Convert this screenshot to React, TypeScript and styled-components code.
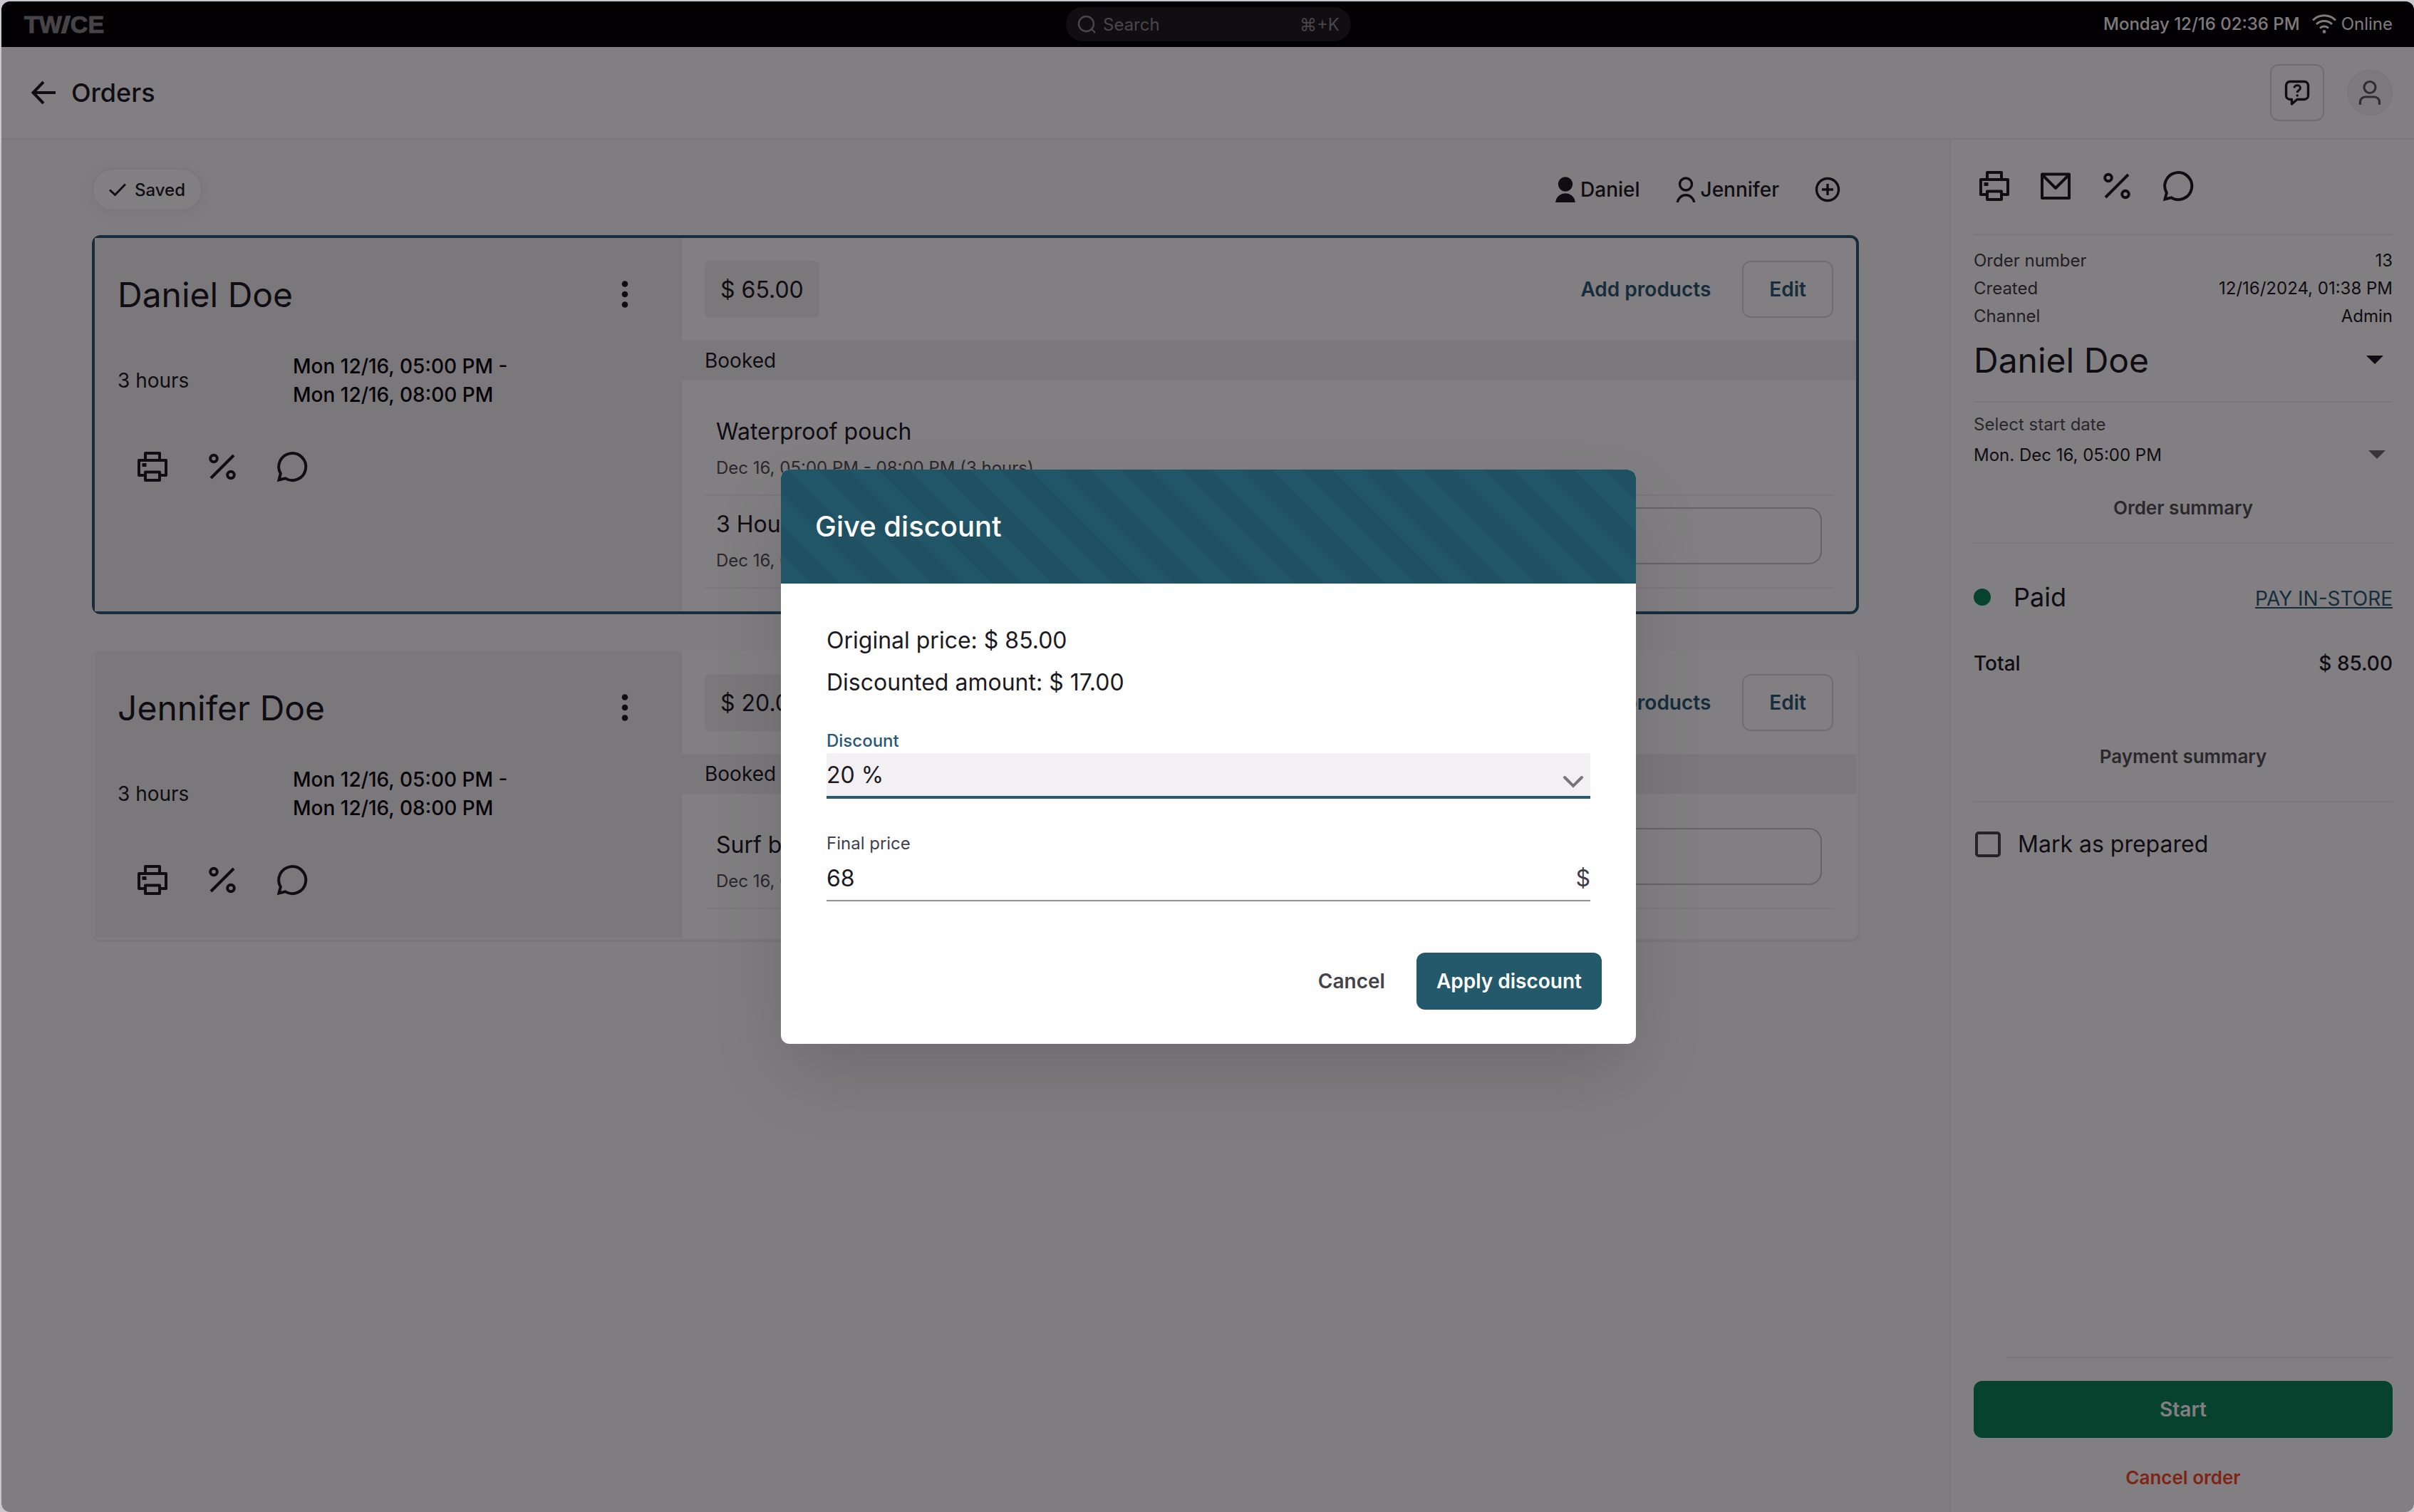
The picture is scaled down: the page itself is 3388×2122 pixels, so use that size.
import React from 'react';
import styled, { createGlobalStyle, css } from 'styled-components';

const color = {
  ink: '#1b1922',
  black: '#050408',
  muted: '#504e56',
  teal: '#2b5b72',
  line: '#f0eef0',
  shade: '#f3f1f3',
  page: '#fcfafc',
};

const GlobalStyle = createGlobalStyle`
  *, *::before, *::after { box-sizing: border-box; }
  html, body { margin: 0; background: #c9c8d0; }
  body, button, input, select {
    font-family: Inter, "Liberation Sans", sans-serif;
    color: ${color.ink};
  }
  button { border: 0; padding: 0; background: none; cursor: pointer; }
  h1, h2, h3, p, dl, dd, ul { margin: 0; padding: 0; }
  svg { display: block; flex: none; }
`;

/* ---------- icons ---------- */

const line = {
  fill: 'none',
  stroke: 'currentColor',
  strokeWidth: 4,
} as const;

const PrinterIcon = () => (
  <svg width="50" height="50" viewBox="0 0 50 50" {...line} strokeLinejoin="round">
    <path d="M15 16V6H35V16" />
    <path d="M14 37H6V16H44V37H36" />
    <path d="M15 32.5H35V44H15Z" />
    <rect x="10.5" y="20" width="6" height="5" fill="currentColor" stroke="none" />
  </svg>
);

const MailIcon = () => (
  <svg width="50" height="50" viewBox="0 0 50 50" {...line} strokeLinejoin="round">
    <path d="M6 8.5H44V42H6Z" />
    <path d="M6.5 9.5L25 28L43.5 9.5" />
  </svg>
);

const PercentIcon = () => (
  <svg width="50" height="50" viewBox="0 0 50 50" {...line}>
    <circle cx="13" cy="13.5" r="4.8" />
    <circle cx="37" cy="36.5" r="4.8" />
    <path d="M9 41L41 9" />
  </svg>
);

const ChatIcon = () => (
  <svg width="50" height="50" viewBox="0 0 50 50" {...line}>
    <path d="M6.5 43.5L8.8 34.6A19 19 0 1 1 15.5 41.4Z" />
  </svg>
);

const ArrowLeftIcon = () => (
  <svg width="36" height="36" viewBox="0 0 36 36" {...line}>
    <path d="M18 3L3.500 18L18 33M3.500 18H35" />
  </svg>
);

const CheckIcon = () => (
  <svg width="24" height="24" viewBox="0 0 24 24" {...line} strokeWidth={3}>
    <path d="M1 12.500L8.500 19.500L23 4.500" />
  </svg>
);

const SearchIcon = () => (
  <svg width="26" height="26" viewBox="0 0 26 26" {...line} strokeWidth={2.4}>
    <circle cx="12.500" cy="12.500" r="10.500" />
    <path d="M20 20L25 25" />
  </svg>
);

const WifiIcon = () => (
  <svg width="36" height="30" viewBox="0 0 36 30" {...line} strokeWidth={3}>
    <path d="M2 10.500A22.500 22.500 0 0 1 34 10.500" />
    <path d="M7 16A15.500 15.500 0 0 1 29 16" />
    <path d="M12 21.500A8.500 8.500 0 0 1 24 21.500" />
    <circle cx="18" cy="26.500" r="2.400" fill="currentColor" stroke="none" />
  </svg>
);

const HelpIcon = () => (
  <svg width="36" height="36" viewBox="0 0 36 36" {...line} strokeWidth={3.4} strokeLinejoin="round">
    <path d="M8 2.500H28A5.500 5.500 0 0 1 33.500 8V22A5.500 5.500 0 0 1 28 27.500H18L10.500 34V27.500H8A5.500 5.500 0 0 1 2.500 22V8A5.500 5.500 0 0 1 8 2.500Z" />
    <path d="M14 11.500C14 6.500 22.500 6.500 22.500 11.500C22.500 14.500 18.200 14.500 18.200 18" strokeWidth={3} />
    <circle cx="18.200" cy="22" r="1.800" fill="currentColor" stroke="none" />
  </svg>
);

const AccountIcon = () => (
  <svg width="34" height="36" viewBox="0 0 34 36" {...line} strokeWidth={3.2}>
    <circle cx="17" cy="10.500" r="8" />
    <path d="M3.500 35V31A7 7 0 0 1 10.500 24H23.500A7 7 0 0 1 30.500 31V35" />
  </svg>
);

const PersonIcon = ({ filled }: { filled?: boolean }) => (
  <svg
    width="28"
    height="36"
    viewBox="0 0 28 36"
    {...line}
    strokeWidth={3.4}
    fill={filled ? 'currentColor' : 'none'}
  >
    <circle cx="14" cy="10.500" r="8.500" />
    <path d={filled ? 'M2.200 34.300A12 11.500 0 0 1 25.800 34.300Z' : 'M2.200 36A12 12.500 0 0 1 25.800 36'} />
  </svg>
);

const PlusCircleIcon = () => (
  <svg width="36" height="36" viewBox="0 0 36 36" {...line} strokeWidth={3.4}>
    <circle cx="18" cy="18" r="15.500" />
    <path d="M18 10V26M10 18H26" />
  </svg>
);

const KebabIcon = () => (
  <svg width="48" height="48" viewBox="0 0 48 48" fill="currentColor">
    <circle cx="24" cy="9.500" r="4.300" />
    <circle cx="24" cy="24" r="4.300" />
    <circle cx="24" cy="38.500" r="4.300" />
  </svg>
);

const CaretIcon = () => (
  <svg width="24" height="12" viewBox="0 0 24 12" fill="currentColor">
    <path d="M0 0H24L12 12Z" />
  </svg>
);

const ChevronIcon = () => (
  <svg width="30" height="18" viewBox="0 0 30 18" {...line} strokeLinecap="round">
    <path d="M3 3L15 15L27 3" />
  </svg>
);

/* ---------- shell ---------- */

const Shell = styled.div`
  position: relative;
  display: flex;
  flex-direction: column;
  min-height: calc(100vh - 2px);
  margin: 2px 0 0 2px;
  border-radius: 12px;
  overflow: hidden;
  background: #fff;
`;

const TopBar = styled.header`
  display: grid;
  grid-template-columns: 1fr 400px 1fr;
  align-items: center;
  height: 64px;
  padding: 0 30px 0 32px;
  background: #000;
  color: #f8f4f8;
  font-size: 24px;
`;

const Logo = styled.div`
  display: flex;
  align-items: center;
  color: #8a888a;
  font-family: 'Liberation Sans', sans-serif;
  font-size: 34px;
  font-weight: 700;
  line-height: 40px;
  -webkit-text-stroke: 1px currentColor;
`;

const LogoSlash = styled.span`
  width: 7px;
  height: 25px;
  margin: 0 3px 0 2px;
  background: currentColor;
  transform: skewX(-16deg);
`;

const SearchBox = styled.label`
  display: flex;
  align-items: center;
  gap: 10px;
  height: 48px;
  padding: 0 16px;
  border-radius: 24px;
  background: #1e1a1f;
  color: #8e8c8e;
`;

const SearchInput = styled.input`
  flex: 1;
  min-width: 0;
  padding: 0;
  border: 0;
  outline: 0;
  background: none;
  color: inherit;
  font-size: 24px;
  &::placeholder { color: inherit; opacity: 1; }
`;

const Status = styled.div`
  display: flex;
  align-items: center;
  justify-content: flex-end;
  gap: 16px;
  padding-bottom: 2px;
`;

const Clock = styled.time`
  font-weight: 500;
`;

const Online = styled.span`
  display: flex;
  align-items: center;
  gap: 6px;
`;

const PageHeader = styled.div`
  display: flex;
  align-items: center;
  justify-content: space-between;
  height: 130px;
  padding: 0 30px 0 41px;
  border-bottom: 2px solid ${color.line};
`;

const BackButton = styled.button`
  display: flex;
  align-items: center;
  gap: 21px;
  font-size: 36px;
  font-weight: 500;
`;

const HeaderActions = styled.div`
  display: flex;
  align-items: center;
  gap: 32px;
`;

const HelpButton = styled.button`
  display: grid;
  place-items: center;
  width: 76px;
  height: 80px;
  border: 2px solid #dcdadc;
  border-radius: 12px;
`;

const Avatar = styled.button`
  display: grid;
  place-items: center;
  width: 64px;
  height: 64px;
  border: 2px solid #f0edf2;
  border-radius: 50%;
  background: #f7f4f9;
  color: #5c5864;
`;

const Columns = styled.div`
  flex: 1;
  display: grid;
  grid-template-columns: 1fr 652px;
`;

const Main = styled.main`
  padding: 40px 127px;
  background: ${color.page};
`;

/* ---------- main column ---------- */

const Toolbar = styled.div`
  display: flex;
  align-items: center;
  justify-content: space-between;
  height: 60px;
  margin-bottom: 34px;
  padding-right: 26px;
`;

const SavedPill = styled.div`
  display: flex;
  align-items: center;
  gap: 12px;
  height: 60px;
  padding: 0 22px;
  border: 2px solid ${color.line};
  border-radius: 30px;
  background: #fff;
  box-shadow: 0 4px 20px rgba(20, 16, 30, 0.06);
  font-size: 24px;
  font-weight: 500;
`;

const People = styled.div`
  display: flex;
  align-items: center;
  gap: 50px;
`;

const PersonButton = styled.button`
  display: flex;
  align-items: center;
  gap: 7px;
  font-size: 28px;
  font-weight: 500;
`;

const Cards = styled.div`
  display: grid;
  gap: 48px;
`;

const Card = styled.section<{ $active?: boolean }>`
  display: grid;
  grid-template-columns: 1fr 2fr;
  border: 4px solid ${(p) => (p.$active ? color.teal : 'transparent')};
  border-radius: 12px;
  background: #fff;
  background-clip: padding-box;
  ${(p) => !p.$active && css`box-shadow: 0 2px 2px rgba(20, 16, 30, 0.06);`}
`;

const Booking = styled.div`
  padding: 49px 56px 56px 32px;
  background: ${color.shade};
`;

const BookingTop = styled.div`
  display: flex;
  align-items: center;
  justify-content: space-between;
  height: 60px;
`;

const BookingName = styled.h2`
  font-size: 48px;
  font-weight: 400;
`;

const BookingTimes = styled.div`
  display: grid;
  grid-template-columns: 246px 1fr;
  align-items: center;
  margin: 51px 0 56px;
  font-size: 28px;
  font-weight: 500;
  line-height: 40px;
`;

const Period = styled.p`
  color: ${color.black};
`;

const Duration = styled.p`
  font-weight: 400;
`;

const IconRow = styled.div<{ $gap: number; $inset: number }>`
  display: flex;
  gap: ${(p) => p.$gap}px;
  padding-left: ${(p) => p.$inset}px;
`;

const IconButton = styled.button`
  display: grid;
  place-items: center;
`;

const ProductsTop = styled.div`
  display: flex;
  align-items: center;
  gap: 16px;
  padding: 32px;
`;

const Price = styled.div`
  display: flex;
  align-items: center;
  height: 80px;
  margin-right: auto;
  padding: 0 22px;
  border-radius: 8px;
  background: ${color.shade};
  font-size: 32px;
`;

const Button = styled.button<{ $kind: 'text' | 'outline' | 'solid' | 'plain' | 'start' }>`
  height: 80px;
  padding: 0 28px;
  border-radius: 12px;
  font-size: 28px;
  font-weight: 600;
  ${(p) => p.$kind === 'text' && css`color: ${color.teal};`}
  ${(p) =>
    p.$kind === 'outline' &&
    css`
      padding: 0 36px;
      border: 2px solid #dcdadc;
      color: ${color.teal};
    `}
  ${(p) => p.$kind === 'solid' && css`background: #23596b; color: #fff;`}
  ${(p) => p.$kind === 'plain' && css`color: #454349;`}
  ${(p) => p.$kind === 'start' && css`background: #088458; color: #fff;`}
`;

const Band = styled.h3`
  height: 56px;
  padding: 0 32px;
  background: ${color.shade};
  font-size: 28px;
  font-weight: 400;
  line-height: 56px;
`;

const Items = styled.ul`
  padding: 32px;
  list-style: none;
`;

const Item = styled.li`
  display: flex;
  justify-content: space-between;
  height: 130px;
  padding: 16px;
  border-bottom: 2px solid #f3f1f3;
`;

const ItemTitle = styled.p`
  padding-top: 4px;
  font-size: 32px;
  line-height: 40px;
`;

const ItemTime = styled.p`
  margin-top: 15px;
  color: ${color.muted};
  font-size: 24px;
  line-height: 32px;
`;

const UnitField = styled.input`
  width: 480px;
  height: 80px;
  padding: 0 24px;
  border: 2px solid #c8c5c8;
  border-radius: 18px;
  background: #fff;
  font-size: 28px;
`;

/* ---------- sidebar ---------- */

const Sidebar = styled.aside`
  display: flex;
  flex-direction: column;
  padding: 40px 30px 17px 32px;
  border-left: 2px solid ${color.line};
  background: #fff;
`;

const Section = styled.div<{ $top: number; $bottom: number }>`
  padding: ${(p) => p.$top}px 0 ${(p) => p.$bottom}px;
  border-bottom: 2px solid ${color.line};
`;

const Facts = styled.dl`
  margin-bottom: 10px;
  font-size: 24px;
  line-height: 39px;
`;

const Fact = styled.div`
  display: flex;
  justify-content: space-between;
  dt { color: #3f3d44; }
`;

const SelectWrap = styled.div<{ $muted?: boolean; $inset: number }>`
  display: flex;
  align-items: center;
  position: relative;
  svg {
    position: absolute;
    right: ${(p) => p.$inset}px;
    color: ${(p) => (p.$muted ? '#6d6b70' : 'inherit')};
    pointer-events: none;
  }
`;

const Select = styled.select<{ $size: number; $height: number }>`
  width: 100%;
  height: ${(p) => p.$height}px;
  padding: 0;
  border: 0;
  outline: 0;
  background: none;
  appearance: none;
  font-size: ${(p) => p.$size}px;
`;

const SmallLabel = styled.label`
  display: block;
  color: ${color.muted};
  font-size: 24px;
  line-height: 34px;
`;

const SummaryButton = styled.button<{ $top: number }>`
  display: block;
  width: 100%;
  height: 60px;
  margin-top: ${(p) => p.$top}px;
  color: #535156;
  font-size: 26px;
  font-weight: 600;
`;

const PaidRow = styled.div`
  display: flex;
  align-items: center;
  height: 48px;
  gap: 32px;
  font-size: 36px;
`;

const PaidDot = styled.span`
  width: 24px;
  height: 24px;
  border-radius: 50%;
  background: #088458;
`;

const PayLink = styled.a`
  margin-left: auto;
  padding-top: 4px;
  color: ${color.teal};
  font-size: 28px;
`;

const TotalRow = styled.div`
  display: flex;
  justify-content: space-between;
  margin-top: 49px;
  font-size: 28px;
  font-weight: 500;
  line-height: 40px;
`;

const Prepared = styled.label`
  display: flex;
  align-items: center;
  gap: 24px;
  margin: 35px 0 0 2px;
  font-size: 32px;
  line-height: 48px;
`;

const Checkbox = styled.input`
  width: 36px;
  height: 36px;
  margin: 0;
  border: 4px solid #45424c;
  border-radius: 5px;
  appearance: none;
`;

const SidebarFoot = styled.div`
  display: grid;
  margin-top: auto;
`;

const FootRule = styled.div`
  height: 2px;
  margin: 0 0 32px 45px;
  background: #eeecee;
`;

const CancelOrder = styled.button`
  height: 64px;
  margin-top: 23px;
  color: #fb4626;
  font-size: 26px;
  font-weight: 600;
`;

/* ---------- dialog ---------- */

const Backdrop = styled.div`
  position: absolute;
  inset: 0;
  display: grid;
  place-items: center;
  padding-left: 2px;
  background: rgba(3, 0, 4, 0.5);
`;

const Dialog = styled.div`
  width: 1200px;
  max-width: 90%;
  border-radius: 12px;
  overflow: hidden;
  background: #fff;
  box-shadow: 0 44px 96px -12px rgba(20, 24, 44, 0.18);
`;

const DialogTitle = styled.h2`
  padding: 0 48px;
  background: repeating-linear-gradient(45deg, #215668 0 30px, #205162 30px 60px);
  color: #fff;
  font-size: 40px;
  font-weight: 500;
  line-height: 160px;
`;

const DialogBody = styled.div`
  padding: 50px 64px 0;
  font-size: 32px;
  line-height: 59px;
`;

const Field = styled.div<{ $top: number; $focused?: boolean }>`
  margin-top: ${(p) => p.$top}px;
  label {
    display: block;
    color: ${(p) => (p.$focused ? '#28587a' : '#413f52')};
    font-size: 24px;
    font-weight: ${(p) => (p.$focused ? 500 : 400)};
    line-height: 34px;
  }
`;

const FieldControl = styled.div<{ $focused?: boolean }>`
  position: relative;
  display: flex;
  align-items: center;
  height: 64px;
  border-bottom: ${(p) => (p.$focused ? '4px solid #235c6d' : '2px solid #918f92')};
  background: ${(p) => (p.$focused ? '#f3f0f4' : 'none')};
  color: #3f3d49;
  svg {
    position: absolute;
    right: 9px;
    bottom: 11px;
    color: #77747a;
    pointer-events: none;
  }
`;

const PriceInput = styled.input`
  flex: 1;
  min-width: 0;
  padding: 0;
  border: 0;
  outline: 0;
  background: none;
  font-size: 32px;
`;

const DialogActions = styled.div`
  display: flex;
  justify-content: flex-end;
  gap: 16px;
  padding: 72px 48px 48px;
`;

/* ---------- content ---------- */

interface Product {
  name: string;
  hasUnit?: boolean;
}

interface BookingCardProps {
  name: string;
  price: string;
  products: Product[];
  active?: boolean;
}

function BookingCard({ name, price, products, active }: BookingCardProps) {
  return (
    <Card $active={active}>
      <Booking>
        <BookingTop>
          <BookingName>{name}</BookingName>
          <IconButton aria-label="More"><KebabIcon /></IconButton>
        </BookingTop>
        <BookingTimes>
          <Duration>3 hours</Duration>
          <Period>Mon 12/16, 05:00 PM -<br />Mon 12/16, 08:00 PM</Period>
        </BookingTimes>
        <IconRow $gap={48} $inset={24}>
          <IconButton aria-label="Print"><PrinterIcon /></IconButton>
          <IconButton aria-label="Discount"><PercentIcon /></IconButton>
          <IconButton aria-label="Comment"><ChatIcon /></IconButton>
        </IconRow>
      </Booking>
      <div>
        <ProductsTop>
          <Price>{price}</Price>
          <Button $kind="text">Add products</Button>
          <Button $kind="outline">Edit</Button>
        </ProductsTop>
        <Band>Booked</Band>
        <Items>
          {products.map((p) => (
            <Item key={p.name}>
              <div>
                <ItemTitle>{p.name}</ItemTitle>
                <ItemTime>Dec 16, 05:00 PM - 08:00 PM (3 hours)</ItemTime>
              </div>
              {p.hasUnit && <UnitField aria-label={p.name} />}
            </Item>
          ))}
        </Items>
      </div>
    </Card>
  );
}

export default function App() {
  return (
    <>
      <GlobalStyle />
      <Shell>
        <TopBar>
          <Logo aria-label="TWICE">TW<LogoSlash />CE</Logo>
          <SearchBox>
            <SearchIcon />
            <SearchInput placeholder="Search" aria-label="Search" />
            <span>⌘+K</span>
          </SearchBox>
          <Status>
            <Clock>Monday 12/16 02:36 PM</Clock>
            <Online><WifiIcon />Online</Online>
          </Status>
        </TopBar>
        <PageHeader>
          <BackButton><ArrowLeftIcon />Orders</BackButton>
          <HeaderActions>
            <HelpButton aria-label="Help"><HelpIcon /></HelpButton>
            <Avatar aria-label="Account"><AccountIcon /></Avatar>
          </HeaderActions>
        </PageHeader>
        <Columns>
          <Main>
            <Toolbar>
              <SavedPill><CheckIcon />Saved</SavedPill>
              <People>
                <PersonButton><PersonIcon filled />Daniel</PersonButton>
                <PersonButton><PersonIcon />Jennifer</PersonButton>
                <IconButton aria-label="Add person"><PlusCircleIcon /></IconButton>
              </People>
            </Toolbar>
            <Cards>
              <BookingCard
                active
                name="Daniel Doe"
                price="$ 65.00"
                products={[{ name: 'Waterproof pouch' }, { name: '3 Hour', hasUnit: true }]}
              />
              <BookingCard
                name="Jennifer Doe"
                price="$ 20.00"
                products={[{ name: 'Surf board', hasUnit: true }]}
              />
            </Cards>
          </Main>
          <Sidebar>
            <Section $top={0} $bottom={42}>
              <IconRow $gap={36} $inset={4}>
                <IconButton aria-label="Print"><PrinterIcon /></IconButton>
                <IconButton aria-label="Email"><MailIcon /></IconButton>
                <IconButton aria-label="Discount"><PercentIcon /></IconButton>
                <IconButton aria-label="Comment"><ChatIcon /></IconButton>
              </IconRow>
            </Section>
            <Section $top={16} $bottom={26}>
              <Facts>
                <Fact><dt>Order number</dt><dd>13</dd></Fact>
                <Fact><dt>Created</dt><dd>12/16/2024, 01:38 PM</dd></Fact>
                <Fact><dt>Channel</dt><dd>Admin</dd></Fact>
              </Facts>
              <SelectWrap $inset={13}>
                <Select $size={48} $height={64} aria-label="Customer">
                  <option>Daniel Doe</option>
                </Select>
                <CaretIcon />
              </SelectWrap>
            </Section>
            <Section $top={14} $bottom={19}>
              <SmallLabel htmlFor="start-date">Select start date</SmallLabel>
              <SelectWrap $muted $inset={10}>
                <Select id="start-date" $size={24} $height={50}>
                  <option>Mon. Dec 16, 05:00 PM</option>
                </Select>
                <CaretIcon />
              </SelectWrap>
              <SummaryButton $top={19}>Order summary</SummaryButton>
            </Section>
            <Section $top={51} $bottom={33}>
              <PaidRow>
                <PaidDot />
                Paid
                <PayLink href="#pay">PAY IN-STORE</PayLink>
              </PaidRow>
              <TotalRow><span>Total</span><span>$ 85.00</span></TotalRow>
              <SummaryButton $top={80}>Payment summary</SummaryButton>
            </Section>
            <Prepared>
              <Checkbox type="checkbox" />
              Mark as prepared
            </Prepared>
            <SidebarFoot>
              <FootRule />
              <Button $kind="start">Start</Button>
              <CancelOrder>Cancel order</CancelOrder>
            </SidebarFoot>
          </Sidebar>
        </Columns>
        <Backdrop>
          <Dialog role="dialog" aria-labelledby="discount-title">
            <DialogTitle id="discount-title">Give discount</DialogTitle>
            <DialogBody>
              <p>Original price: $ 85.00</p>
              <p>Discounted amount: $ 17.00</p>
              <Field $top={36} $focused>
                <label htmlFor="discount">Discount</label>
                <FieldControl $focused>
                  <Select id="discount" $size={32} $height={60}>
                    <option>20 %</option>
                  </Select>
                  <ChevronIcon />
                </FieldControl>
              </Field>
              <Field $top={46}>
                <label htmlFor="final-price">Final price</label>
                <FieldControl>
                  <PriceInput id="final-price" defaultValue="68" />
                  <span>$</span>
                </FieldControl>
              </Field>
            </DialogBody>
            <DialogActions>
              <Button $kind="plain">Cancel</Button>
              <Button $kind="solid">Apply discount</Button>
            </DialogActions>
          </Dialog>
        </Backdrop>
      </Shell>
    </>
  );
}
